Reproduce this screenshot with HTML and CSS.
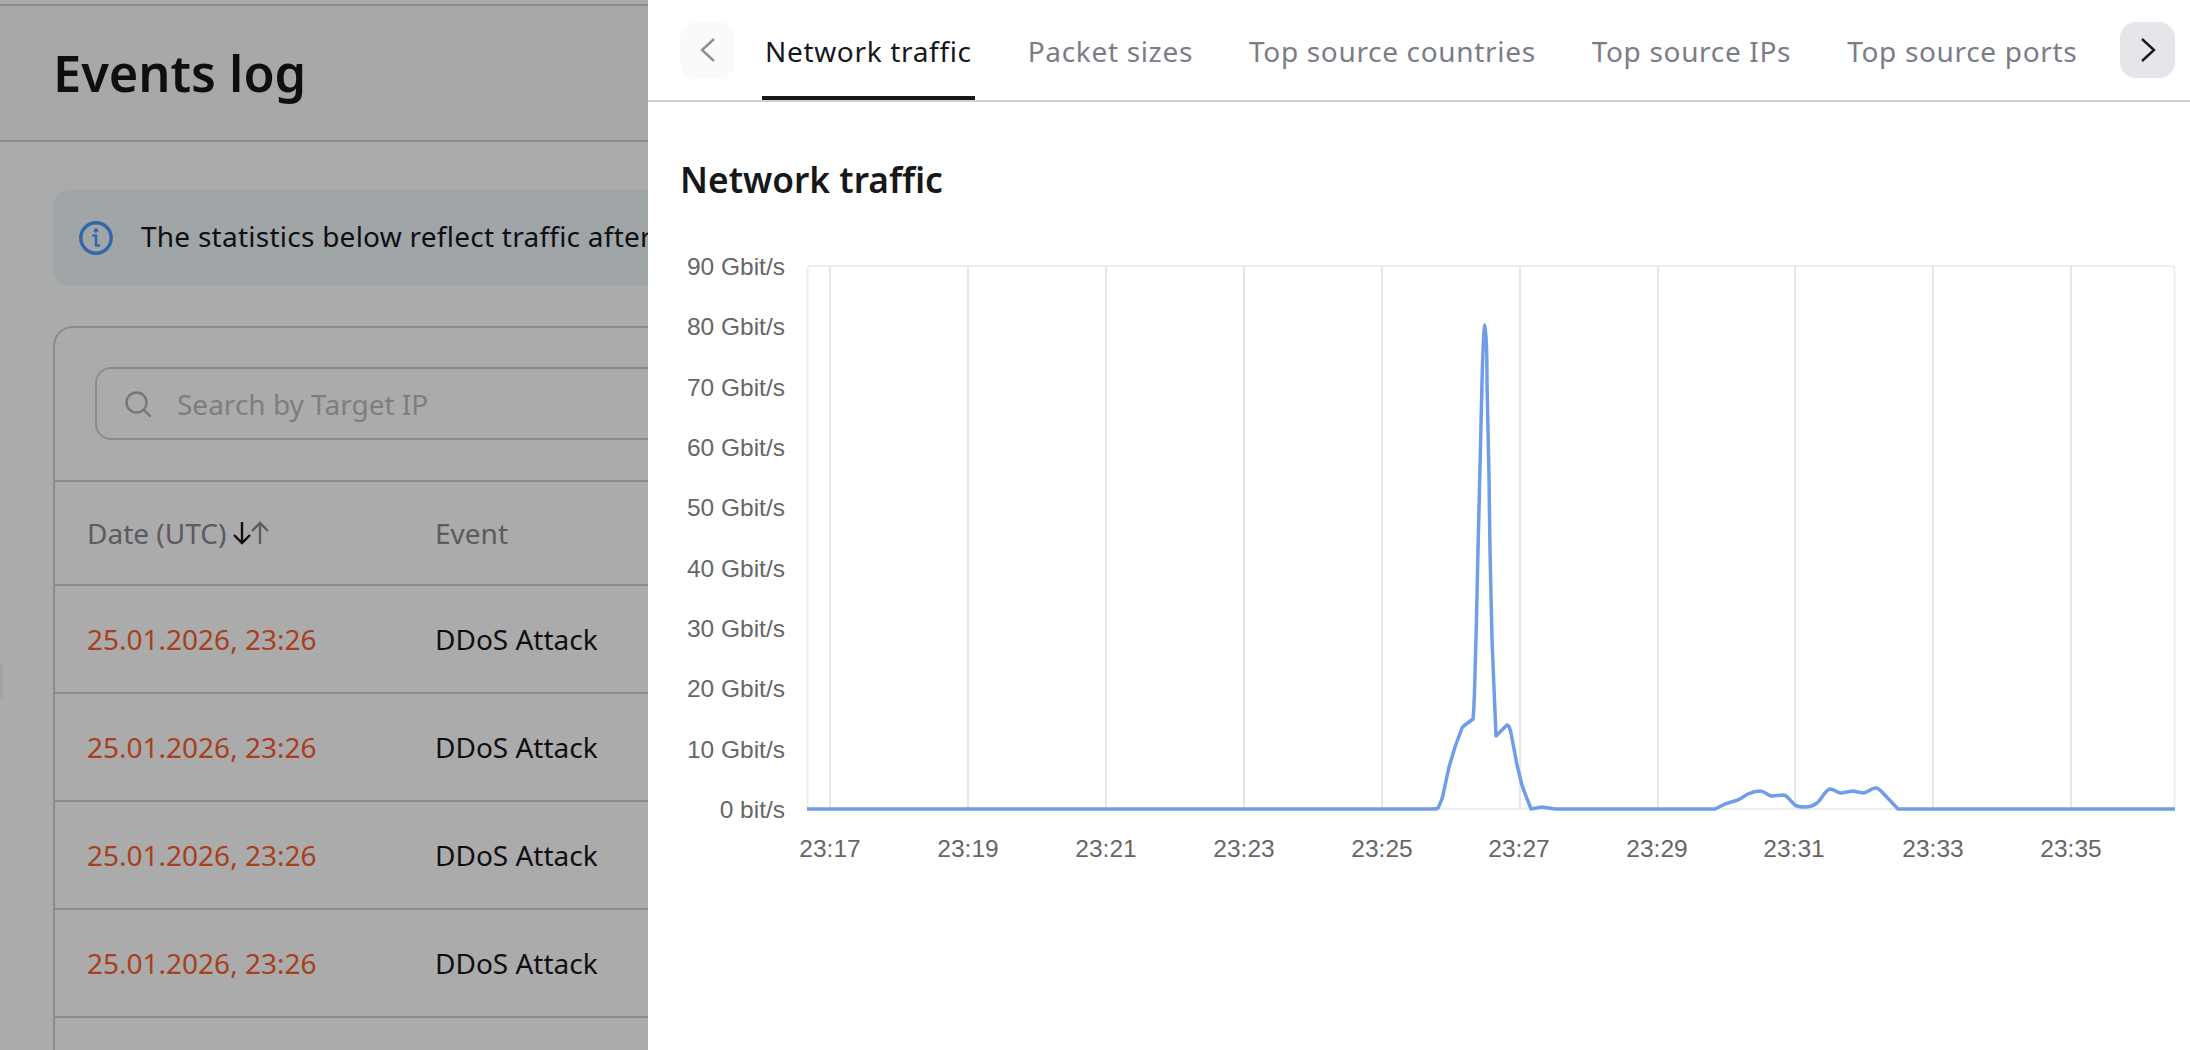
FILE: index.html
```html
<!DOCTYPE html>
<html lang="en">
<head>
<meta charset="utf-8">
<title>Events log</title>
<link rel="stylesheet" href="styles.css">
</head>
<body>
<div class="page">
  <header class="page-header"><h1 class="page-title">Events log</h1></header>
  <main class="content">
    <div class="banner">
      <svg class="banner-icon" viewBox="0 0 34 34"><circle cx="17" cy="17" r="15.2" fill="none" stroke="currentColor" stroke-width="3.4"/><circle cx="17" cy="9.5" r="2.2" fill="currentColor"/><path d="M14.5 14.5H17V24.5H20" fill="none" stroke="currentColor" stroke-width="2.6" stroke-linecap="round" stroke-linejoin="round"/></svg>
      <span class="banner-text">The statistics below reflect traffic after mitigation</span>
    </div>
    <section class="card">
      <div class="search-wrap">
        <div class="search">
          <svg class="search-icon" viewBox="0 0 28 28"><circle cx="12.5" cy="12.5" r="10" fill="none" stroke="currentColor" stroke-width="2.4"/><path d="M20 20l6 6" stroke="currentColor" stroke-width="2.4" stroke-linecap="round"/></svg>
          <span>Search by Target IP</span>
        </div>
      </div>
      <div class="row row-head">
        <div class="col-date">Date (UTC)
          <svg class="sort-icon" viewBox="0 0 36 24"><path d="M9 1v21M1 14l8 8 8-8" class="sort-on"/><path d="M27 23V2M19 10l8-8 8 8" class="sort-off"/></svg>
        </div>
        <div>Event</div>
      </div>
      <div class="row"><div class="col-date date">25.01.2026, 23:26</div><div>DDoS Attack</div></div>
      <div class="row"><div class="col-date date">25.01.2026, 23:26</div><div>DDoS Attack</div></div>
      <div class="row"><div class="col-date date">25.01.2026, 23:26</div><div>DDoS Attack</div></div>
      <div class="row"><div class="col-date date">25.01.2026, 23:26</div><div>DDoS Attack</div></div>
      <div class="row"></div>
    </section>
  </main>
  <div class="side-handle"></div>
</div>
<div class="overlay"></div>
<aside class="panel">
  <nav class="tabs">
    <button class="tab-arrow arrow-prev"><svg viewBox="0 0 24 32"><path d="M18 5L6 16l12 11"/></svg></button>
    <div class="tab-list">
      <div class="tab active">Network traffic</div>
      <div class="tab">Packet sizes</div>
      <div class="tab">Top source countries</div>
      <div class="tab">Top source IPs</div>
      <div class="tab">Top source ports</div>
    </div>
    <button class="tab-arrow arrow-next"><svg viewBox="0 0 24 32"><path d="M6 5l12 11L6 27"/></svg></button>
  </nav>
  <div class="panel-body">
    <h2 class="panel-title">Network traffic</h2>
    <svg class="chart" viewBox="0 0 1542 700" width="1542" height="700">
      <g transform="translate(-648,-205)">
        <rect class="plot-frame" x="807.5" y="266" width="1367" height="543" rx="3"/>
        <path class="grid" d="M830 266V809M968 266V809M1106 266V809M1244 266V809M1382 266V809M1520 266V809M1658 266V809M1795 266V809M1933 266V809M2071 266V809"/>
        <g class="y-labels">
          <text x="785" y="266">90 Gbit/s</text>
          <text x="785" y="326.5">80 Gbit/s</text>
          <text x="785" y="387">70 Gbit/s</text>
          <text x="785" y="447">60 Gbit/s</text>
          <text x="785" y="507.5">50 Gbit/s</text>
          <text x="785" y="568">40 Gbit/s</text>
          <text x="785" y="628">30 Gbit/s</text>
          <text x="785" y="688.5">20 Gbit/s</text>
          <text x="785" y="749">10 Gbit/s</text>
          <text x="785" y="809">0 bit/s</text>
        </g>
        <g class="x-labels">
          <text x="830" y="848">23:17</text>
          <text x="968" y="848">23:19</text>
          <text x="1106" y="848">23:21</text>
          <text x="1244" y="848">23:23</text>
          <text x="1382" y="848">23:25</text>
          <text x="1519" y="848">23:27</text>
          <text x="1657" y="848">23:29</text>
          <text x="1794" y="848">23:31</text>
          <text x="1933" y="848">23:33</text>
          <text x="2071" y="848">23:35</text>
        </g>
        <path class="series" d="M807 809H1433C1436 809 1437 809 1438 808C1440 804 1442 800 1443 795L1449 767C1452 757 1452 757 1455 747L1462 728C1463 726 1464 726 1465 725L1473 719C1475 700 1475 660 1476 640L1478 550L1480 467L1482 383C1483 345 1484 325 1485 325C1486 325 1487 345 1487 383L1489 477L1490 550L1492 640L1496 736L1507 725C1509 725 1510 729 1511 733L1517 765C1519 772 1520 778 1522 785C1525 794 1528 801 1531 809L1542 807L1555 809H1715L1725 804L1738 800C1742 798 1744 796 1748 794C1752 792 1756 791 1760 791C1765 791 1768 796 1772 796L1784 795C1788 796 1791 802 1795 805C1798 807 1801 807 1805 807C1809 807 1813 806 1817 803C1822 799 1825 790 1830 789C1834 789 1837 793 1841 793L1853 791L1863 793C1867 793 1871 788 1876 788C1878 788 1880 790 1882 792L1898 809H2175"/>
      </g>
    </svg>
  </div>
</aside>
</body>
</html>
```
FILE: styles.css
```css
* { box-sizing: border-box; }
html, body { margin: 0; height: 100%; overflow: hidden; }
body { background: #fff; color: #17171a; font-family: "Noto Sans", sans-serif; font-size: 28px; line-height: 40px; }

.page { position: relative; height: 1050px; overflow: hidden; padding-top: 4px; background: #fff; }
.page-header { height: 138px; border-top: 2px solid #d1d1d6; border-bottom: 2px solid #d1d1d6; padding-left: 53px; display: flex; align-items: center; background: #fbfbfc; }
.page-title { margin: 0; font-size: 50.5px; line-height: 64px; font-weight: 600; color: #17171a; }
.content { padding: 48px 0 0 53px; }
.banner { height: 96px; border-radius: 16px; background: #eff6fb; display: flex; align-items: center; gap: 28px; padding-left: 26px; }
.banner-icon { width: 34px; height: 34px; color: #4b9aff; flex: none; }
.banner-text { letter-spacing: 0.25px; margin-bottom: 5px; }
.card { margin-top: 40px; border: 2px solid #d1d1d6; border-right: 0; border-bottom: 0; border-radius: 20px 0 0 0; }
.search-wrap { height: 152px; padding: 39px 0 0 40px; }
.search { height: 73px; border: 2px solid #d1d1d6; border-radius: 16px; display: flex; align-items: center; gap: 25px; padding-left: 27px; color: #bcbcc2; }
.search-icon { width: 28px; height: 28px; flex: none; color: #b4b4ba; }
.row { height: 108px; border-top: 2px solid #d1d1d6; display: flex; align-items: center; padding-left: 32px; }
.row-head { height: 104px; color: #88888f; }
.col-date { width: 348px; display: flex; align-items: center; gap: 7px; }
.date { color: #fb5e2f; }
.sort-icon { width: 36px; height: 24px; }
.sort-icon path { fill: none; stroke-width: 2.4; }
.sort-on { stroke: #17171a; }
.sort-off { stroke: #88888f; }
.side-handle { position: absolute; left: 0; top: 663px; width: 3px; height: 35px; border-radius: 0 3px 3px 0; background: #f2f2f4; }

.overlay { position: fixed; inset: 0; background: rgba(0, 0, 0, 0.33); }
.panel { position: fixed; top: 0; right: 0; bottom: 0; width: 1542px; background: #fff; }
.tabs { height: 102px; border-bottom: 2px solid #d1d1d6; display: flex; align-items: flex-start; padding: 22px 15px 0 32px; }
.tab-arrow { width: 55px; height: 56px; border: 0; border-radius: 16px; padding: 0; flex: none; display: flex; align-items: center; justify-content: center; }
.tab-arrow svg { width: 24px; height: 32px; fill: none; stroke-width: 2.4; }
.arrow-prev { background: #fafafa; }
.arrow-prev svg { stroke: #8e8e93; }
.arrow-next { background: #e5e5ea; }
.arrow-next svg { stroke: #17171a; }
.tab-list { flex: 1; display: flex; gap: 50px; padding-left: 27px; }
.tab { height: 78px; padding: 9px 3px 0; color: #7c7c86; white-space: nowrap; letter-spacing: 0.67px; }
.tab.active { color: #17171a; border-bottom: 4px solid #17171a; }
.panel-body { padding: 51px 0 0; }
.panel-title { margin: 0 0 0 32px; font-size: 35.3px; line-height: 52px; font-weight: 600; color: #17171a; }
.chart { display: block; }

.plot-frame { fill: none; stroke: #eeeeee; stroke-width: 2; }
.grid { fill: none; stroke: #e6e6e6; stroke-width: 2; }
.series { fill: none; stroke: #6f9de8; stroke-width: 3.5; stroke-linejoin: round; }
.y-labels text, .x-labels text { font-family: "Liberation Sans", Arial, sans-serif; font-size: 24.5px; fill: #666; dominant-baseline: central; }
.y-labels text { text-anchor: end; }
.x-labels text { text-anchor: middle; }
```
